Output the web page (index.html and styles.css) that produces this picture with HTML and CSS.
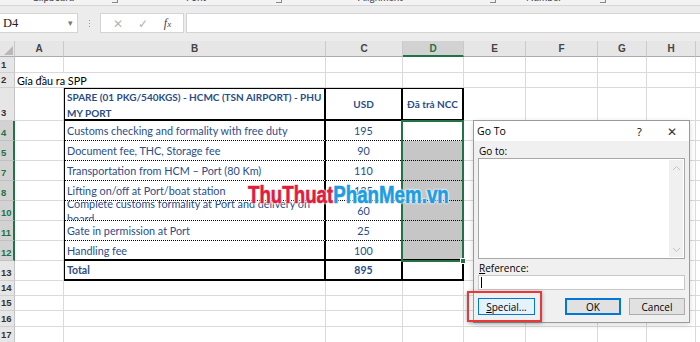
FILE: index.html
```html
<!DOCTYPE html>
<html>
<head>
    <title>Go To - Excel</title>
    <link rel="stylesheet" href="styles.css">
</head>
<body>
<div class="app">
    <div class="ribbon">
        <span class="group g1">Clipboard</span><span class="launch l1"></span>
        <span class="group g2">Font</span><span class="launch l2"></span>
        <span class="group g3">Alignment</span><span class="launch l3"></span>
        <span class="group g4">Number</span><span class="launch l4"></span>
    </div>

    <div class="formula-bar">
        <div class="name-box"><span>D4</span><span class="drop">&#9662;</span></div>
        <div class="grip"><i></i><i></i><i></i></div>
        <div class="fx-box">
            <span class="cancel">&#10005;</span>
            <span class="enter">&#10003;</span>
            <span class="fx">f<small>x</small></span>
        </div>
        <div class="formula-input"></div>
    </div>

    <div class="sheet">
        <!-- column headers -->
        <div class="ch corner"><span class="tri"></span></div>
        <div class="ch">A</div><div class="ch">B</div><div class="ch">C</div><div class="ch on">D</div>
        <div class="ch">E</div><div class="ch">F</div><div class="ch">G</div><div class="ch">H</div><div class="ch">I</div>

        <!-- bordered price block B3:D13 -->
        <div class="block">
            <div class="bc bold wrap">SPARE (01 PKG/540KGS) - HCMC (TSN AIRPORT) - PHU<br>MY PORT</div>
            <div class="bc bold mid">USD</div>
            <div class="bc bold mid last">Đã trả NCC</div>

            <div class="bc dot">Customs checking and formality with free duty</div>
            <div class="bc dot num">195</div>
            <div class="bc dot last"></div>

            <div class="bc dot">Document fee, THC, Storage fee</div>
            <div class="bc dot num">90</div>
            <div class="bc dot last shade"></div>

            <div class="bc dot">Transportation from HCM – Port (80 Km)</div>
            <div class="bc dot num">110</div>
            <div class="bc dot last shade"></div>

            <div class="bc dot">Lifting on/off at Port/boat station</div>
            <div class="bc dot num">135</div>
            <div class="bc dot last shade"></div>

            <div class="bc dot"><div class="clip">Complete customs formality at Port and delivery on<br>board</div></div>
            <div class="bc dot num">60</div>
            <div class="bc dot last shade"></div>

            <div class="bc dot">Gate in permission at Port</div>
            <div class="bc dot num">25</div>
            <div class="bc dot last shade"></div>

            <div class="bc thick">Handling fee</div>
            <div class="bc thick num">100</div>
            <div class="bc thick last shade"></div>

            <div class="bc bold end">Total</div>
            <div class="bc bold num end">895</div>
            <div class="bc last end"></div>
        </div>

        <div class="rh">1</div><div class="c"></div><div class="c"></div><div class="c"></div><div class="c"></div><div class="c"></div><div class="c"></div><div class="c"></div><div class="c"></div><div class="c"></div>
        <div class="rh">2</div><div class="c spill">Gía đầu ra SPP</div><div class="c"></div><div class="c"></div><div class="c"></div><div class="c"></div><div class="c"></div><div class="c"></div><div class="c"></div><div class="c"></div>
        <div class="rh">3</div><div class="c"></div><div class="c"></div><div class="c"></div><div class="c"></div><div class="c"></div><div class="c"></div>
        <div class="rh on">4</div><div class="c"></div><div class="c"></div><div class="c"></div><div class="c"></div><div class="c"></div><div class="c"></div>
        <div class="rh on">5</div><div class="c"></div><div class="c"></div><div class="c"></div><div class="c"></div><div class="c"></div><div class="c"></div>
        <div class="rh on">7</div><div class="c"></div><div class="c"></div><div class="c"></div><div class="c"></div><div class="c"></div><div class="c"></div>
        <div class="rh on">8</div><div class="c"></div><div class="c"></div><div class="c"></div><div class="c"></div><div class="c"></div><div class="c"></div>
        <div class="rh on">10</div><div class="c"></div><div class="c"></div><div class="c"></div><div class="c"></div><div class="c"></div><div class="c"></div>
        <div class="rh on">11</div><div class="c"></div><div class="c"></div><div class="c"></div><div class="c"></div><div class="c"></div><div class="c"></div>
        <div class="rh on">12</div><div class="c"></div><div class="c"></div><div class="c"></div><div class="c"></div><div class="c"></div><div class="c"></div>
        <div class="rh">13</div><div class="c"></div><div class="c"></div><div class="c"></div><div class="c"></div><div class="c"></div><div class="c"></div>
        <div class="rh">14</div><div class="c"></div><div class="c"></div><div class="c"></div><div class="c"></div><div class="c"></div><div class="c"></div><div class="c"></div><div class="c"></div><div class="c"></div>
        <div class="rh">15</div><div class="c"></div><div class="c"></div><div class="c"></div><div class="c"></div><div class="c"></div><div class="c"></div><div class="c"></div><div class="c"></div><div class="c"></div>
        <div class="rh">16</div><div class="c"></div><div class="c"></div><div class="c"></div><div class="c"></div><div class="c"></div><div class="c"></div><div class="c"></div><div class="c"></div><div class="c"></div>
        <div class="rh">17</div><div class="c"></div><div class="c"></div><div class="c"></div><div class="c"></div><div class="c"></div><div class="c"></div><div class="c"></div><div class="c"></div><div class="c"></div>
    </div>

    <!-- selection frame over D4:D12 -->
    <div class="selection"><span class="handle"></span></div>

    <div class="watermark"><span class="red">ThuThuat</span><span class="blue">PhanMem.vn</span></div>

    <div class="dialog">
        <div class="dlg-title">
            <span class="dlg-name">Go To</span>
            <span class="dlg-help">?</span>
            <span class="dlg-close">&#10005;</span>
        </div>
        <div class="dlg-body">
            <div class="dlg-label">Go to:</div>
            <div class="listbox">
                <div class="scroll">
                    <svg width="9" height="6" viewBox="0 0 9 6"><path d="M1 5 L4.5 1.5 L8 5" fill="none" stroke="#c2c2c2" stroke-width="1"/></svg>
                    <svg width="9" height="6" viewBox="0 0 9 6"><path d="M1 1 L4.5 4.5 L8 1" fill="none" stroke="#c2c2c2" stroke-width="1"/></svg>
                </div>
            </div>
            <div class="dlg-label ref"><u>R</u>eference:</div>
            <div class="ref-input"><span class="caret"></span></div>
            <div class="dlg-buttons">
                <button class="btn special"><u>S</u>pecial...</button>
                <span class="spacer"></span>
                <button class="btn ok">OK</button>
                <button class="btn">Cancel</button>
            </div>
        </div>
    </div>
    <div class="highlight"></div>
</div>
</body>
</html>
```

FILE: styles.css
```css
html, body {
    margin: 0;
    padding: 0;
    background: #fff;
}
body {
    width: 700px;
    height: 342px;
    overflow: hidden;
    font-family: Lato, "Liberation Sans", sans-serif;
}
.app {
    position: relative;
    width: 700px;
    height: 342px;
    overflow: hidden;
}

/* ribbon remains at the very top */
.ribbon {
    position: relative;
    height: 5px;
    background: #f3f3f3;
    border-bottom: 1px solid #d6d6d6;
    overflow: hidden;
    font-size: 10px;
    color: #444;
}
.group {
    position: absolute;
    top: -9px;
    line-height: 12px;
}
.g1 { left: 32px; }
.g2 { left: 186px; }
.g3 { left: 358px; }
.g4 { left: 526px; }
.launch {
    position: absolute;
    top: -4px;
    width: 5px;
    height: 6px;
    border-right: 1px solid #888;
    border-bottom: 1px solid #888;
}
.l1 { left: 112px; }
.l2 { left: 276px; }
.l3 { left: 490px; }
.l4 { left: 600px; }

/* formula bar */
.formula-bar {
    display: flex;
    align-items: center;
    height: 35px;
    background: #ececec;
    box-sizing: border-box;
    padding: 7px 0 8px;
}
.name-box, .fx-box, .formula-input {
    height: 20px;
    box-sizing: border-box;
    background: #fff;
    border: 1px solid #d4d4d4;
}
.name-box {
    width: 78px;
    border-left: none;
    display: flex;
    align-items: center;
    justify-content: space-between;
    padding: 0 4px 0 3px;
    font-family: "Liberation Serif", serif;
    font-size: 12.5px;
    color: #222;
}
.name-box .drop {
    font-size: 9px;
    color: #777;
}
.grip {
    width: 22px;
    display: flex;
    flex-direction: column;
    align-items: center;
    gap: 2px;
}
.grip i {
    width: 1px;
    height: 1px;
    background: #9a9a9a;
}
.fx-box {
    width: 84px;
    display: flex;
    align-items: center;
    justify-content: space-around;
    padding: 0 4px;
    color: #b4b4b4;
    font-size: 12px;
}
.fx-box .fx {
    font-family: "Liberation Serif", serif;
    font-style: italic;
    color: #444;
    font-size: 12px;
}
.fx-box .fx small {
    font-size: 9px;
}
.formula-input {
    flex: 1;
    margin-left: 2px;
    border-right: none;
}

/* worksheet */
.sheet {
    display: grid;
    grid-template-columns: 15px 49px 262px 77px 61px 62px 72px 49px 49px 60px;
    grid-template-rows: 16px 16px 15px 33px repeat(8, 20px) 15px 15px 16px 16px;
    font-size: 10.8px;
    color: #2a4d87;
}
.sheet > div {
    box-sizing: border-box;
    min-width: 0;
}
.ch {
    background: #e6e6e6;
    border-right: 1px solid #cacaca;
    border-bottom: 1px solid #ababab;
    display: flex;
    align-items: center;
    justify-content: center;
    font-family: "Liberation Sans", sans-serif;
    font-size: 10px;
    font-weight: bold;
    color: #444;
}
.ch.on {
    background: #d2d2d2;
    color: #217346;
    border-bottom: 2px solid #217346;
}
.ch.corner {
    position: relative;
}
.tri {
    position: absolute;
    right: 1px;
    bottom: 1px;
    width: 0;
    height: 0;
    border-left: 9px solid transparent;
    border-bottom: 9px solid #b8b8b8;
}
.rh {
    background: #e6e6e6;
    border-right: 1px solid #c4c4c4;
    border-bottom: 1px solid #d0d0d0;
    display: flex;
    align-items: flex-end;
    padding: 0 0 1px 1px;
    font-family: "Liberation Sans", sans-serif;
    font-weight: bold;
    font-size: 9.5px;
    line-height: 12px;
    color: #333;
    overflow: hidden;
    white-space: nowrap;
}
.rh.on {
    background: #d2d2d2;
    color: #217346;
    border-right: 2px solid #217346;
    border-bottom-color: #c0c0c0;
}
.c {
    border-right: 1px solid #dadada;
    border-bottom: 1px solid #dadada;
}
.c.spill {
    border-right: none;
    white-space: nowrap;
    color: #000;
    padding: 0 2px;
    line-height: 15px;
}

/* bordered block B3:D13 */
.block {
    grid-column: 3 / 6;
    grid-row: 4 / 13;
    margin: -1px 0 0 -1px;
    border: 2px solid #000;
    display: grid;
    grid-template-columns: 261px 77px 1fr;
    grid-template-rows: 32px repeat(7, 20px) 1fr;
    background: #fff;
}
.bc {
    box-sizing: border-box;
    min-width: 0;
    border-right: 2px solid #000;
    display: flex;
    align-items: center;
    padding: 0 2px;
    white-space: nowrap;
    overflow: hidden;
}
.bc.last { border-right: none; }
.bc.wrap, .bc.mid { border-bottom: 2px solid #000; }
.bc.dot { border-bottom: 1px dotted #000; }
.bc.thick { border-bottom: 2px solid #000; }
.bold {
    font-weight: bold;
    font-size: 10px;
}
.bc.end { font-size: 10.5px; }
.wrap {
    line-height: 16px;
    padding-top: 1px;
}
.mid, .num { justify-content: center; }
.bc.shade { background: #c6c6c6; }
.clip {
    height: 19px;
    display: flex;
    align-items: center;
    line-height: 15px;
    overflow: hidden;
}

/* selection frame */
.selection {
    position: absolute;
    left: 401px;
    top: 120px;
    width: 63px;
    height: 142px;
    box-sizing: border-box;
    border: 2px solid #217346;
}
.handle {
    position: absolute;
    right: -4px;
    bottom: -4px;
    width: 4px;
    height: 4px;
    background: #217346;
    border: 1px solid #fff;
}

/* watermark */
.watermark {
    position: absolute;
    left: 248px;
    top: 181px;
    font-family: "Liberation Sans", sans-serif;
    font-weight: bold;
    font-size: 24px;
    line-height: 28px;
    white-space: nowrap;
    transform: scaleX(0.78);
    transform-origin: left center;
    -webkit-text-stroke: 0.6px currentColor;
    text-shadow: 0 0 2px #fff, 0 0 2px #fff, 0 0 3px #fff, 0 0 3px #fff;
}
.watermark .red { color: #e31b3d; }
.watermark .blue { color: #1e9de3; }

/* Go To dialog */
.dialog {
    position: absolute;
    left: 473px;
    top: 120px;
    width: 217px;
    height: 203px;
    box-sizing: border-box;
    border: 1px solid #9a9a9a;
    background: #f0f0f0;
    box-shadow: 0 2px 6px rgba(0, 0, 0, 0.15);
    display: flex;
    flex-direction: column;
    font-family: "Open Sans", "Noto Sans", sans-serif;
    font-size: 10px;
    color: #000;
}
.dlg-title {
    height: 20px;
    background: #fff;
    display: flex;
    align-items: center;
    padding: 0 0 0 3px;
}
.dlg-name {
    flex: 1;
    font-size: 10.5px;
}
.dlg-help {
    width: 18px;
    font-size: 11px;
}
.dlg-close {
    width: 34px;
    text-align: center;
    font-size: 12px;
    color: #333;
}
.dlg-body {
    flex: 1;
    padding: 3px 4px 0 4px;
    display: flex;
    flex-direction: column;
}
.dlg-label {
    line-height: 14px;
    padding-left: 1px;
}
.listbox {
    height: 101px;
    box-sizing: border-box;
    background: #fff;
    border: 1px solid #a8a8a8;
    display: flex;
    justify-content: flex-end;
}
.scroll {
    width: 14px;
    background: #f0f0f0;
    display: flex;
    flex-direction: column;
    justify-content: space-between;
    align-items: center;
    padding: 5px 0 4px;
    margin: 1px;
}
.dlg-label.ref {
    margin-top: 2px;
}
.ref-input {
    height: 15px;
    box-sizing: border-box;
    background: #fff;
    border: 1px solid #c8c8c8;
    display: flex;
    align-items: center;
    padding-left: 2px;
}
.caret {
    width: 1px;
    height: 11px;
    background: #000;
}
.dlg-buttons {
    display: flex;
    margin-top: 8px;
    gap: 8px;
}
.spacer { flex: 1; }
.btn {
    width: 56px;
    height: 17px;
    padding: 0;
    box-sizing: border-box;
    background: #e1e1e1;
    border: 1px solid #adadad;
    font-family: "Open Sans", "Noto Sans", sans-serif;
    font-size: 10px;
    color: #000;
    line-height: 14px;
}
.btn.special {
    width: 57px;
    background: #e5f1fb;
    border-color: #0078d7;
}
.btn.ok {
    border: 2px solid #0078d7;
}
.highlight {
    position: absolute;
    left: 467px;
    top: 291px;
    width: 75px;
    height: 31px;
    box-sizing: border-box;
    border: 2px solid #e8383b;
    box-shadow: 0 1px 4px rgba(0, 0, 0, 0.35);
}
```
